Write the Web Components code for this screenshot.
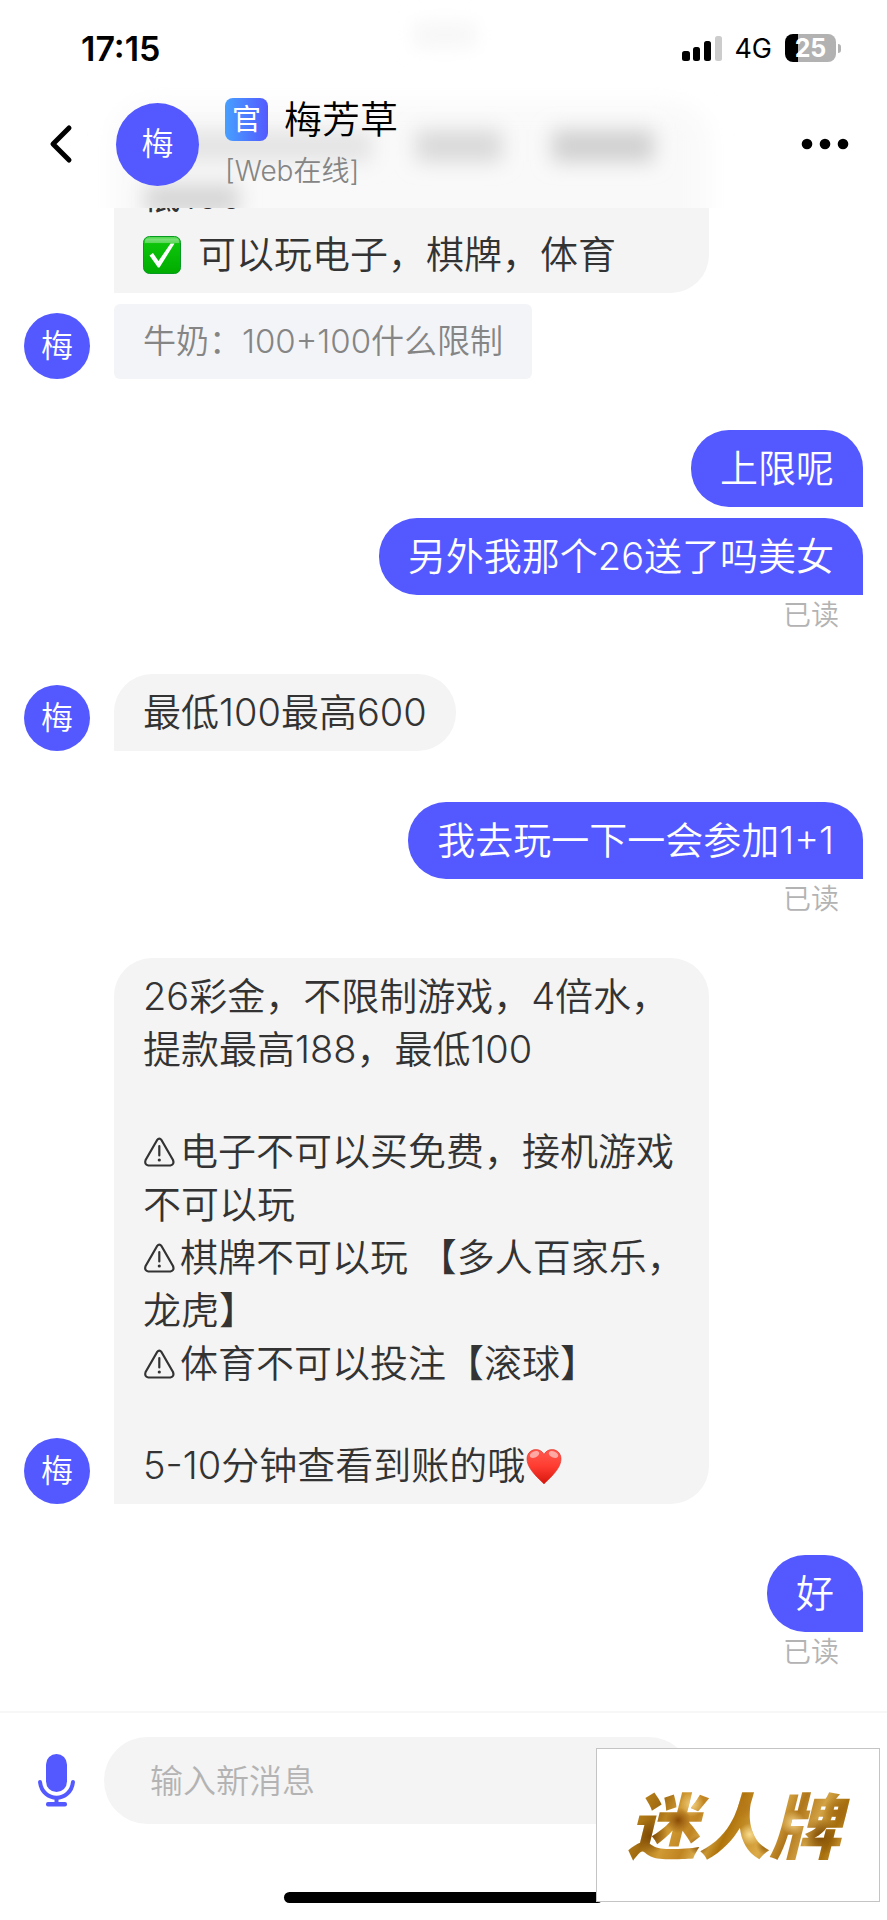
<!DOCTYPE html>
<html lang="zh-CN">
<head>
<meta charset="utf-8">
<meta name="viewport" content="width=device-width, initial-scale=1">
<title>梅芳草</title>
<style>
  body {
    margin: 0;
    background: #fff;
    color: #333;
    font-family: Inter, "Noto Sans CJK SC", sans-serif;
    font-weight: 350;
  }
</style>
</head>
<body>
<chat-app>
  <status-bar slot="top" time="17:15" network="4G" battery="25"></status-bar>
  <chat-header slot="top" initial="梅" badge="官" name="梅芳草" presence="[Web在线]"></chat-header>

  <message-group>
    <chat-bubble wide>
      <text-line></text-line>
      <text-line>低100</text-line>
      <text-line spaced><emoji-icon name="check"></emoji-icon>可以玩电子，棋牌，体育</text-line>
    </chat-bubble>
    <chat-bubble kind="quote" initial="梅">牛奶：100+100什么限制</chat-bubble>
  </message-group>

  <message-group side="out" status="已读">
    <chat-bubble kind="out">上限呢</chat-bubble>
    <chat-bubble kind="out">另外我那个26送了吗美女</chat-bubble>
  </message-group>

  <message-group>
    <chat-bubble initial="梅">最低100最高600</chat-bubble>
  </message-group>

  <message-group side="out" status="已读">
    <chat-bubble kind="out">我去玩一下一会参加1+1</chat-bubble>
  </message-group>

  <message-group>
    <chat-bubble initial="梅" wide>
      <text-line>26彩金，不限制游戏，4倍水，</text-line>
      <text-line>提款最高188，最低100</text-line>
      <text-line blank></text-line>
      <text-line><emoji-icon name="warn"></emoji-icon>电子不可以买免费，接机游戏</text-line>
      <text-line>不可以玩</text-line>
      <text-line><emoji-icon name="warn"></emoji-icon>棋牌不可以玩 【多人百家乐，</text-line>
      <text-line>龙虎】</text-line>
      <text-line><emoji-icon name="warn"></emoji-icon>体育不可以投注【滚球】</text-line>
      <text-line blank></text-line>
      <text-line>5-10分钟查看到账的哦<emoji-icon name="heart"></emoji-icon></text-line>
    </chat-bubble>
  </message-group>

  <message-group side="out" status="已读">
    <chat-bubble kind="out">好</chat-bubble>
  </message-group>

  <message-composer slot="bottom"></message-composer>
  <brand-stamp slot="stamp">迷人牌</brand-stamp>
</chat-app>

<script>
const define = (name, render) => customElements.define(name, class extends HTMLElement {
  connectedCallback() {
    if (this.shadowRoot) return;
    const t = document.createElement('template');
    t.innerHTML = render(this);
    this.attachShadow({ mode: 'open' }).append(t.content.cloneNode(true));
  }
});
const attr = (el, n) => el.getAttribute(n) || '';

define('chat-app', () => `
  <style>
    :host { display: flex; flex-direction: column; min-height: 100vh; position: relative; }
    header { position: sticky; top: 0; z-index: 2; height: 208px; background: #fff; isolation: isolate; }
    .frost { position: absolute; inset: 0; z-index: -1; width: 100%; height: 100%; overflow: hidden; }
    main {
      flex: 1; display: flex; flex-direction: column; gap: 51px;
      margin-top: -104px; padding: 0 24px 51px;
    }
  </style>
  <header>
    <!-- Frosted view of the messages that have scrolled behind the header. -->
    <svg class="frost" aria-hidden="true">
      <defs>
        <filter id="soft" x="-20%" y="-20%" width="140%" height="140%"><feGaussianBlur stdDeviation="12"/></filter>
        <filter id="ink" x="-60%" y="-100%" width="220%" height="300%"><feGaussianBlur stdDeviation="10"/></filter>
      </defs>
      <rect x="113" y="103" width="596" height="200" rx="38" fill="#f9f9f9" filter="url(#soft)"/>
      <g filter="url(#ink)">
        <rect x="414" y="24" width="62" height="22" fill="#f5f5f5"/>
        <rect x="150" y="130" width="222" height="32" fill="#e4e4e4"/>
        <rect x="416" y="130" width="86" height="32" fill="#d9d9d9"/>
        <rect x="552" y="130" width="102" height="32" fill="#d0d0d0"/>
        <rect x="145" y="184" width="94" height="30" fill="#d6d6d6"/>
      </g>
    </svg>
    <slot name="top"></slot>
  </header>
  <main><slot></slot></main>
  <slot name="bottom"></slot>
  <slot name="stamp"></slot>`);

define('status-bar', el => `
  <style>
    :host { display: flex; align-items: center; height: 68px; padding: 14px 46px 0 81px; color: #000; }
    time { font-size: 34px; font-weight: 600; margin-right: auto; }
    .net { font-size: 27px; font-weight: 400; margin: 0 13px 0 12px; }
    .cell {
      width: 51px; height: 28px; border-radius: 8px; text-align: center;
      font-size: 25px; font-weight: 700; line-height: 28px; color: #fff;
      background: linear-gradient(90deg, #000 25%, #b2b2b2 25%);
    }
    .nub { width: 3px; height: 9px; margin-left: 2px; border-radius: 0 4px 4px 0; background: #b2b2b2; }
    svg { display: block; }
  </style>
  <time>${attr(el, 'time')}</time>
  <svg width="40" height="26" viewBox="0 0 40 26" aria-hidden="true">
    <rect x="0" y="16" width="8" height="10" rx="2.5"/>
    <rect x="11" y="12" width="7" height="14" rx="2.5"/>
    <rect x="22" y="6" width="7" height="20" rx="2.5"/>
    <rect x="33" y="1" width="7" height="25" rx="2.5" fill="#ccc"/>
  </svg>
  <span class="net">${attr(el, 'network')}</span>
  <span class="cell">${attr(el, 'battery')}</span><span class="nub"></span>`);

define('user-avatar', () => `
  <style>
    :host {
      display: flex; align-items: center; justify-content: center; flex: none;
      width: var(--avatar, 66px); height: var(--avatar, 66px);
      border-radius: 50%; background: #5459ff; color: #fff; font-size: 32px; line-height: 36px;
    }
  </style>
  <span><slot></slot></span>`);

define('chat-header', el => `
  <style>
    :host { display: flex; align-items: center; height: 124px; padding: 0 29px 0 36px; color: #000; }
    button { border: 0; padding: 0; background: none; display: flex; align-items: center; justify-content: center; }
    .back { width: 50px; height: 60px; margin-right: 30px; }
    .more { width: 66px; height: 60px; }
    user-avatar { --avatar: 83px; }
    .who { flex: 1; margin-left: 26px; }
    h1 { margin: 0; display: flex; align-items: center; gap: 16px; font-size: 38px; font-weight: 350; line-height: 54px; }
    .badge {
      width: 43px; height: 43px; border-radius: 8px; color: #fff; text-align: center;
      font-size: 29px; line-height: 43px; font-weight: 400;
      background: linear-gradient(90deg, #46a0ff, #5459ff);
    }
    p { margin: 0; font-size: 28px; line-height: 50px; color: #858585; }
  </style>
  <button class="back" aria-label="返回">
    <svg width="24" height="40" viewBox="0 0 24 40" fill="none" stroke="#000" stroke-width="5" stroke-linecap="round" stroke-linejoin="round"><path d="M20 4 4 20l16 16"/></svg>
  </button>
  <user-avatar>${attr(el, 'initial')}</user-avatar>
  <div class="who">
    <h1><span class="badge">${attr(el, 'badge')}</span>${attr(el, 'name')}</h1>
    <p>${attr(el, 'presence')}</p>
  </div>
  <button class="more" aria-label="更多">
    <svg width="48" height="12" viewBox="0 0 48 12"><circle cx="6" cy="6" r="5.3"/><circle cx="24" cy="6" r="5.3"/><circle cx="42" cy="6" r="5.3"/></svg>
  </button>`);

define('message-group', el => `
  <style>
    :host { display: flex; flex-direction: column; gap: 11px; align-items: flex-start; }
    :host([side="out"]) { align-items: flex-end; }
    .status { height: 28px; line-height: 40px; font-size: 28px; color: #b3b3b3; margin: -11px 24px 0 0; }
  </style>
  <slot></slot>
  ${el.hasAttribute('status') ? `<div class="status">${attr(el, 'status')}</div>` : ''}`);

define('chat-bubble', el => `
  <style>
    :host { display: flex; align-items: flex-end; gap: 24px; }
    :host(:not([initial]):not([kind="out"])) { padding-left: 90px; }
    .body {
      padding: 12px 29px; border-radius: 38px 38px 38px 0;
      background: #f4f4f4; font-size: 38px; line-height: 53px; white-space: nowrap;
    }
    :host([wide]) .body { width: 537px; }
    :host([kind="out"]) .body { background: #5459ff; color: #fff; border-radius: 38px 38px 0 38px; }
    :host([kind="quote"]) .body { background: #f3f4f7; color: #858585; border-radius: 6px; font-size: 33px; line-height: 51px; }
  </style>
  ${el.hasAttribute('initial') ? `<user-avatar>${attr(el, 'initial')}</user-avatar>` : ''}
  <div class="body"><slot></slot></div>`);

define('text-line', () => `
  <style>
    :host { display: flex; align-items: center; height: 53px; }
    :host([blank]) { height: 49px; }
    :host([spaced]) { margin-top: 6px; gap: 17px; }
  </style>
  <slot></slot>`);

const icons = {
  check: ['38', '38', `<defs><linearGradient id="g" x2="0" y2="1"><stop stop-color="#5fdc5c"/><stop offset=".2" stop-color="#0dc40a"/><stop offset="1" stop-color="#00ac00"/></linearGradient></defs>
    <rect x=".5" y=".5" width="37" height="37" rx="6" fill="url(#g)" stroke="#079a22"/>
    <path d="M4 2.500h30q2 .5 2 2.500v2H2V5q0-2 2-2.500z" fill="#fff" opacity=".3"/>
    <path d="M6.500 19.500 10 17l5.500 8L27.500 7.500h4L16.500 31.500h-1.500z" fill="#fff"/>`],
  warn: ['37', '38', `<g fill="none" stroke="#333" stroke-width="2.200" stroke-linecap="round" stroke-linejoin="round"><path d="M14 7.200q2.300-3 4.600 0L30 27q1.700 4.500-2.600 5.500H5.300Q1 31.500 2.600 27z"/><path d="M16.300 13v9.500"/></g><circle cx="16.300" cy="27" r="1.600" fill="#333"/>`],
  heart: ['38', '38', `<defs><linearGradient id="h" x2="0" y2="1"><stop stop-color="#ff5a50"/><stop offset=".5" stop-color="#ff3b30"/><stop offset="1" stop-color="#d5160d"/></linearGradient></defs>
    <path d="M19 7.500C16 1 5.500.5 2.500 8.500-.5 19 11 29 19 37 27 29 38.500 19 35.500 8.500 32.500.5 22 1 19 7.500z" fill="url(#h)" stroke="#e0281d" stroke-width=".6"/>
    <ellipse cx="9.500" cy="7.500" rx="5" ry="3" fill="#fff" opacity=".5" transform="rotate(-25 9.500 7.500)"/><ellipse cx="28.500" cy="7.500" rx="5" ry="3" fill="#fff" opacity=".5" transform="rotate(25 28.500 7.500)"/>`]
};
define('emoji-icon', el => {
  const [w, h, art] = icons[attr(el, 'name')];
  return `<style>:host { display: block; flex: none; } svg { display: block; }</style>
  <svg width="${w}" height="${h}" viewBox="0 0 ${w} ${h}" aria-hidden="true">${art}</svg>`;
});

define('message-composer', () => `
  <style>
    :host { display: block; border-top: 2px solid #f7f7f7; padding-top: 24px; }
    form { display: flex; align-items: center; gap: 28px; margin: 0; padding: 0 195px 0 37px; }
    button { flex: none; border: 0; padding: 0; background: none; }
    svg { display: block; }
    input {
      flex: 1; min-width: 0; box-sizing: border-box; height: 87px; border: 0; border-radius: 44px;
      padding: 0 46px; background: #f4f4f4; font: inherit; font-size: 33px; color: #333; outline: none;
    }
    input::placeholder { color: #b3b3b3; opacity: 1; }
    .home { width: 36%; height: 11px; border-radius: 6px; background: #000; margin: 68px auto 17px; }
  </style>
  <form>
    <button type="button" aria-label="语音">
      <svg width="39" height="54" viewBox="0 0 39 54" fill="#5459ff">
        <rect x="9" y="0" width="21" height="38" rx="10.500"/>
        <path d="M3 28c2.500 21 30.500 21 33 0" fill="none" stroke="#5459ff" stroke-width="4" stroke-linecap="round"/>
        <rect x="17.500" y="43" width="4" height="9"/><rect x="9" y="48" width="21" height="4.500" rx="2"/>
      </svg>
    </button>
    <input type="text" placeholder="输入新消息" aria-label="输入新消息">
  </form>
  <div class="home"></div>`);

define('brand-stamp', () => `
  <style>
    :host {
      position: absolute; right: 7px; bottom: 18px; z-index: 3; box-sizing: border-box;
      width: 284px; height: 154px; display: flex; align-items: center; justify-content: center;
      background: #fff; border: 1px solid #c4c4c4;
    }
    span {
      font-size: 71px; line-height: 90px; font-weight: 900; font-style: italic; color: transparent;
      padding: 4px 12px 0 4px;
      background:
        radial-gradient(circle at 12% 62%, #7d4a06 0, transparent 8%),
        radial-gradient(circle at 24% 45%, #8a4c06 0, transparent 7%),
        radial-gradient(circle at 33% 72%, #7a4304 0, transparent 6%),
        radial-gradient(circle at 52% 30%, #b5781a 0, transparent 9%),
        radial-gradient(circle at 62% 72%, #8f5a08 0, transparent 6%),
        radial-gradient(circle at 86% 62%, #7f4c06 0, transparent 9%),
        radial-gradient(circle at 94% 36%, #a36a10 0, transparent 7%),
        radial-gradient(circle at 55% 60%, #f8dc90 0, transparent 8%),
        radial-gradient(circle at 74% 48%, #f5d488 0, transparent 7%),
        radial-gradient(circle at 30% 28%, #f3d080 0, transparent 7%),
        linear-gradient(115deg, #a87412 0, #b47d18 12%, #a06a10 18%, #d09a34 26%, #c08422 34%, #dcb050 40%, #b0740c 47%, #c8922c 54%, #dcab48 62%, #b0761a 70%, #d2a244 78%, #a8700c 86%, #d0a040 94%, #a87414 100%);
      -webkit-background-clip: text; background-clip: text;
    }
  </style>
  <span><slot></slot></span>`);
</script>
</body>
</html>
